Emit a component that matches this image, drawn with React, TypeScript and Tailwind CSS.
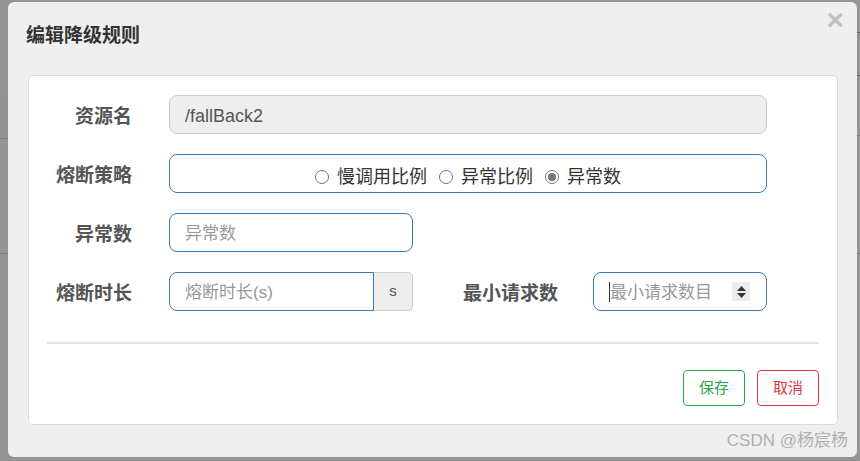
import React from "react";

const font = { fontFamily: '"Liberation Sans", "Noto Sans CJK SC", sans-serif' };

function Radio({ label, checked }: { label: string; checked?: boolean }) {
  return (
    <label className="flex items-center gap-[8px]">
      <span className="w-[14px] h-[14px] rounded-full border border-[#767676] bg-white flex items-center justify-center">
        {checked && <span className="w-[8px] h-[8px] rounded-full bg-[#767676]" />}
      </span>
      <span className="text-[18px] text-[#333] leading-none">{label}</span>
    </label>
  );
}

const labelCls = "text-right text-[19px] font-bold text-[#555] mt-[6px]";

export default function App() {
  return (
    <div className="w-[860px] h-[461px] bg-[#959595] relative overflow-hidden" style={font}>
      <div className="absolute left-0 top-[95px] w-[8px] h-[43px] bg-[#909294]" />
      <div className="absolute left-0 top-[138px] w-[8px] h-px bg-[#7d7d7d]" />
      <div className="absolute left-0 top-[253px] w-[8px] h-px bg-[#7d7d7d]" />
      <div className="absolute right-0 top-[32px] w-[4px] h-px bg-[#3a6ea0]" />
      <div className="absolute right-0 top-[75px] w-[4px] h-px bg-[#3a6ea0]" />
      <div className="absolute right-0 top-[135px] w-[4px] h-px bg-[#7d7d7d]" />
      <div className="absolute right-0 top-[253px] w-[4px] h-px bg-[#7d7d7d]" />

      <div className="absolute left-[8px] top-[2px] w-[849px] h-[455px] bg-[#efefef] rounded-[6px] flex flex-col">
        <div className="h-[73px] flex items-center justify-between pl-[18px] pr-[13px]">
          <h4 className="text-[19px] font-bold text-[#333] -mt-[4px]">编辑降级规则</h4>
          <span className="text-[30px] font-bold text-[#c0c0c0] leading-none self-start mt-[3px]">×</span>
        </div>
        <div className="mx-[20px] w-[810px] h-[350px] bg-white border border-[#dcdcdc] rounded-[5px] px-[18px] pt-[19px]">
          <div className="flex flex-col gap-[20px]">
            <div className="flex items-center h-[39px]">
              <div className={`w-[85px] ${labelCls}`}>资源名</div>
              <div className="ml-[37px] w-[598px] h-[39px] bg-[#eeeeee] border border-[#cccccc] rounded-[8px] flex items-center px-[15px] pt-[3px] text-[18px] text-[#555]">
                /fallBack2
              </div>
            </div>
            <div className="flex items-center h-[39px]">
              <div className={`w-[85px] ${labelCls}`}>熔断策略</div>
              <div className="ml-[37px] w-[598px] h-[39px] border border-[#3a7ab9] rounded-[8px] flex items-center justify-center gap-[12px] pt-[6px]">
                <Radio label="慢调用比例" />
                <Radio label="异常比例" />
                <Radio label="异常数" checked />
              </div>
            </div>
            <div className="flex items-center h-[39px]">
              <div className={`w-[85px] ${labelCls}`}>异常数</div>
              <div className="ml-[37px] w-[244px] h-[39px] border border-[#3a7ab9] rounded-[8px] flex items-center px-[15px] pt-[2px] text-[17px] text-[#999]">
                异常数
              </div>
            </div>
            <div className="flex items-center h-[39px]">
              <div className={`w-[85px] ${labelCls}`}>熔断时长</div>
              <div className="ml-[37px] flex h-[39px]">
                <div className="w-[205px] h-[39px] border border-[#3a7ab9] rounded-l-[8px] flex items-center px-[15px] pt-[2px] text-[17px] text-[#999]">
                  熔断时长(s)
                </div>
                <div className="w-[39px] h-[39px] bg-[#eeeeee] border border-l-0 border-[#cccccc] rounded-r-[5px] flex items-center justify-center text-[15px] text-[#555]">
                  s
                </div>
              </div>
              <div className={`ml-[45px] w-[100px] ${labelCls}`}>最小请求数</div>
              <div className="ml-[35px] w-[174px] h-[39px] border border-[#3a7ab9] rounded-[8px] flex items-center pl-[15px] pr-[16px] text-[17px] text-[#999]">
                <span className="w-px h-[20px] bg-[#333]" />
                <span className="flex-1 pt-[2px]">最小请求数目</span>
                <span className="w-[18px] h-[19px] bg-[#ececec] flex flex-col items-center justify-center gap-[2px]">
                  <svg width="9" height="5" viewBox="0 0 9 5"><path d="M0 5 L4.5 0 L9 5 Z" fill="#333" /></svg>
                  <svg width="9" height="5" viewBox="0 0 9 5"><path d="M0 0 L4.5 5 L9 0 Z" fill="#333" /></svg>
                </span>
              </div>
            </div>
          </div>
          <div className="mt-[31px] h-[2px] bg-[#e5e5e5]" />
          <div className="mt-[26px] flex justify-end gap-[12px]">
            <button className="w-[62px] h-[36px] border border-[#28a745] rounded-[4px] text-[15px] text-[#28a745] bg-white">保存</button>
            <button className="w-[62px] h-[36px] border border-[#dc3545] rounded-[4px] text-[15px] text-[#dc3545] bg-white">取消</button>
          </div>
        </div>
        <div className="flex-1 flex items-center justify-end pr-[9px] text-[17px] text-[#b0b0b0]">
          CSDN @杨宸杨
        </div>
      </div>
    </div>
  );
}
